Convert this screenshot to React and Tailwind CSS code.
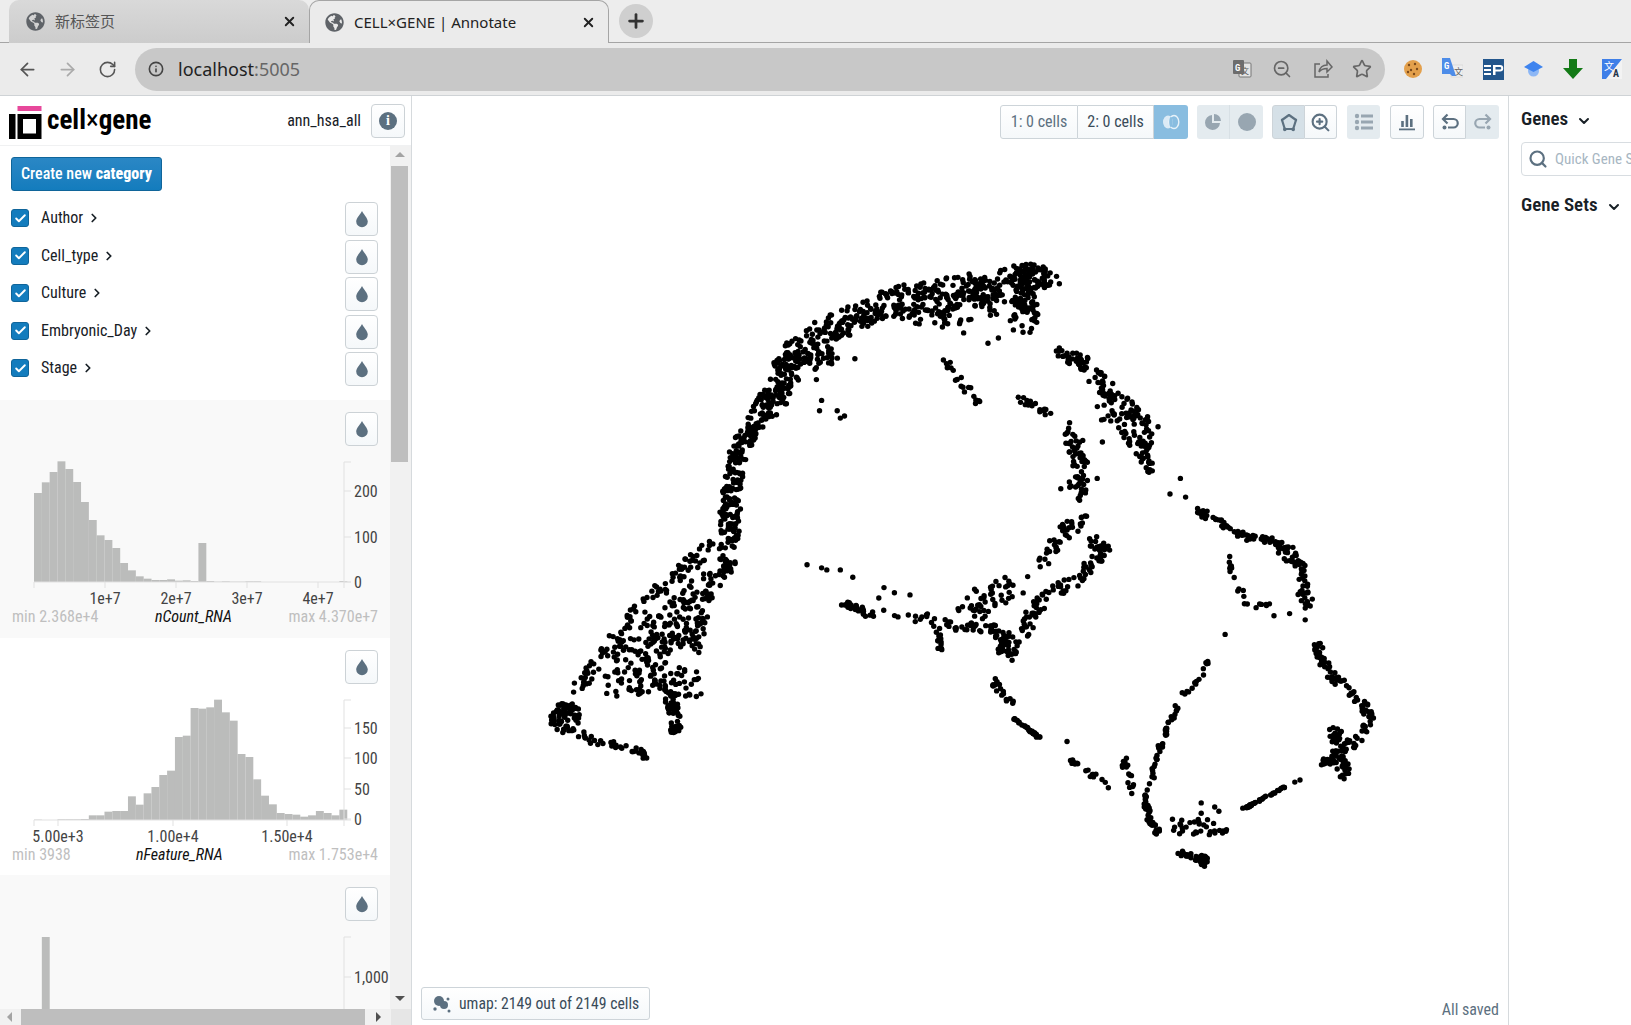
import { ArrowLeft, ArrowRight, RotateCw, Info, ZoomOut, Star, X, Plus, ChevronRight, ChevronDown, Search, ZoomIn, Check } from 'lucide-react';
import { FaGlobeAmericas } from 'react-icons/fa';

const hist1 = [280,248,217,185,208,247,307,361,407,421,445,490,512,530,537,541,541,539,543,542,544,430,544,546,545,546,546,545,545,547,547,547,547,547,547,547,547,547,547,544].map((t) => (547 - t) / 3);
const hist2 = [540,541,541,539,539,539,538,527,527,516,514,514,470,495,461,442,406,393,292,288,205,207,203,180,218,243,343,352,419,468,494,520,523,525,531,527,514,520,527,510].map((t) => (541 - t) / 3);
const hist3 = [0,120];

// scatter is traced in shrunk-picture coords, scaled by 1.04 when drawn
const strokes = [
  [[[542,688],[544,690]], 15, 70],
  [[[552,702],[570,712],[600,718],[625,728]], 4, 36],
  [[[645,668],[650,706]], 7, 52],
  [[[552,665],[580,630],[610,590],[650,552],[690,522]], 8, 95],
  [[[590,655],[640,650],[665,660]], 16, 85],
  [[[590,628],[650,620]], 13, 50],
  [[[620,610],[650,590],[680,560]], 14, 70],
  [[[640,622],[675,600]], 10, 32],
  [[[668,625],[680,575],[705,535]], 7, 50],
  [[[700,540],[702,490],[708,440],[720,415]], 10, 175],
  [[[720,415],[745,385],[765,340],[800,315],[850,293]], 14, 270],
  [[[850,293],[900,285],[950,280]], 17, 170],
  [[[880,302],[930,312]], 9, 28],
  [[[965,262],[1012,268]], 11, 85],
  [[[985,265],[985,312]], 14, 85],
  [[[940,270],[960,295]], 12, 40],
  [[[752,350],[800,345]], 10, 50],
  [[[730,385],[765,370]], 8, 28],
  [[[908,340],[925,370],[940,388]], 5, 18],
  [[[980,382],[1012,402]], 4, 18],
  [[[1010,338],[1045,350]], 7, 36],
  [[[1050,360],[1075,385],[1105,410]], 9, 72],
  [[[1105,410],[1100,440],[1112,458]], 5, 32],
  [[[1060,395],[1090,420],[1095,440]], 9, 32],
  [[[1030,415],[1040,450],[1035,478]], 10, 62],
  [[[1050,520],[1062,528],[1040,555],[1010,570],[995,585],[980,615]], 7, 100],
  [[[1003,542],[1025,510],[1045,500]], 8, 42],
  [[[968,622],[970,625]], 11, 40],
  [[[905,600],[940,605],[970,610]], 8, 42],
  [[[905,626],[900,602]], 3, 14],
  [[[925,590],[975,560]], 15, 48],
  [[[810,580],[832,588]], 3.5, 28],
  [[[832,588],[898,595]], 5, 18],
  [[[1150,490],[1195,515],[1240,525]], 4, 65],
  [[[1225,520],[1255,550],[1255,585]], 7, 55],
  [[[1180,535],[1195,575]], 3.5, 12],
  [[[1198,583],[1222,580]], 4, 8],
  [[[1265,620],[1280,650],[1305,670],[1318,690]], 5, 65],
  [[[1318,690],[1300,722]], 4, 18],
  [[[1285,700],[1290,745]], 9, 62],
  [[[1268,738],[1300,712]], 5, 20],
  [[[1195,778],[1235,757]], 1, 34],
  [[[1162,632],[1155,650],[1135,670],[1125,695],[1115,720],[1105,760],[1100,775]], 2.5, 62],
  [[[1100,765],[1105,790],[1115,802]], 3.5, 32],
  [[[1130,795],[1175,795]], 8, 32],
  [[[1132,820],[1158,826]], 3, 26],
  [[[1157,826],[1158,828]], 6, 18],
  [[[955,655],[975,680]], 4.5, 18],
  [[[975,690],[1000,710]], 1.5, 30],
  [[[1030,730],[1050,745],[1065,755]], 3.5, 18],
  [[[1080,730],[1090,765]], 4, 15],
];

const loose = [[776,543],[790,546],[795,548],[808,548],[820,555],[850,565],[860,570],[875,572],[845,575],[785,365],[790,385],[788,395],[805,395],[808,402],[812,400],[822,345],[800,340],[1135,460],[1140,478],[1125,475],[1178,610],[1225,592],[1240,590],[1255,596],[1245,752],[1250,750],[1155,772],[1155,782],[1168,776],[1172,780],[1026,713],[960,325],[950,330],[1020,470],[1055,460],[1060,425],[938,388],[942,386]];

function buildDots() {
  let s = 91823;
  const rnd = () => {
    s = (s + 0x6d2b79f5) | 0;
    let t = Math.imul(s ^ (s >>> 15), 1 | s);
    t = (t + Math.imul(t ^ (t >>> 7), 61 | t)) ^ t;
    return ((t ^ (t >>> 14)) >>> 0) / 4294967296;
  };
  const out = loose.map(([x, y]) => [x * 1.04, y * 1.04]);
  strokes.forEach(([pts, w, n]) => {
    const lens = pts.slice(1).map((p, i) => Math.hypot(p[0] - pts[i][0], p[1] - pts[i][1]));
    const total = lens.reduce((a, b) => a + b, 0);
    for (let k = 0; k < n; k++) {
      let d = rnd() * total;
      let i = 0;
      while (i < lens.length - 1 && d > lens[i]) d -= lens[i++];
      const f = d / lens[i];
      const a = rnd() * Math.PI * 2;
      const r = w * Math.sqrt(rnd());
      out.push([
        (pts[i][0] + (pts[i + 1][0] - pts[i][0]) * f + Math.cos(a) * r) * 1.04,
        (pts[i][1] + (pts[i + 1][1] - pts[i][1]) * f + Math.sin(a) * r) * 1.04,
      ]);
    }
  });
  return out;
}
const dots = buildDots();

function Drop() {
  return (
    <svg width="16" height="18" viewBox="0 0 16 18" fill="#5c7080">
      <path d="M8 1C7 3.5 2.2 8 2.2 11.6a5.8 5.6 0 0 0 11.6 0C13.8 8 9 3.5 8 1z" />
    </svg>
  );
}

function DropButton() {
  return (
    <button className="w-[33px] h-[34px] flex items-center justify-center rounded-[4px] border border-[#ccd2d6] bg-gradient-to-b from-white to-[#f5f8fa]">
      <Drop />
    </button>
  );
}

function CategoryRow({ name }) {
  return (
    <div className="h-[34px] flex items-center">
      <span className="w-[18px] h-[18px] -mt-[2px] rounded-[3px] bg-[#137cbd] border border-[#10659a] flex items-center justify-center">
        <Check size={13} color="white" strokeWidth={3.5} />
      </span>
      <span className="ml-3 text-[16px] text-[#182026] -mt-[2px]">{name}</span>
      <ChevronRight size={14} strokeWidth={3} className="ml-[4px] text-[#182026] -mt-[2px]" />
      <span className="ml-auto"><DropButton /></span>
    </div>
  );
}

function Histogram({ bars, start = 34, yTicks, xTicks, name, min, max, bg, nameClass, bottom = 'pb-[10px]' }) {
  const base = 132;
  return (
    <section className={`${bg} pt-3 ${bottom} shrink-0`}>
      <div className="flex justify-end pr-3"><DropButton /></div>
      <svg width="390" height="157" className="mt-1 block">
        {bars.map((h, i) => h > 0 && (
          <rect key={i} x={start + i * 7.83} y={base - h} width="7.9" height={h} fill="#bbbcbb" />
        ))}
        <path d={`M34 ${base + 6}V${base}H344V${base + 6}`} fill="none" stroke="#e1e1e1" />
        <path d={`M351 12H344V${base}H351`} fill="none" stroke="#e1e1e1" />
        {yTicks.map(([label, y]) => (
          <g key={label}>
            <path d={`M344 ${y}H351`} stroke="#e1e1e1" />
            <text x="354" y={y + 6} fontSize="16" fill="#444">{label}</text>
          </g>
        ))}
        {xTicks.map(([label, x]) => (
          <g key={label}>
            <path d={`M${x} ${base}V${base + 6}`} stroke="#e1e1e1" />
            <text x={x} y={base + 22} fontSize="16" fill="#444" textAnchor="middle">{label}</text>
          </g>
        ))}
      </svg>
      <div className="relative h-5 px-3 flex justify-between items-center text-[16px] text-[#bfbfbf]">
        <span>{min}</span>
        <span className={`${nameClass} absolute italic text-[#111]`}>{name}</span>
        <span>{max}</span>
      </div>
    </section>
  );
}

function Btn({ w, children, className = '' }) {
  return (
    <div style={{ width: w }} className={`h-full flex items-center justify-center border border-[#cdd4d9] bg-gradient-to-b from-white to-[#f5f8fa] text-[#5c7080] ${className}`}>
      {children}
    </div>
  );
}

function PolygonIcon() {
  return (
    <svg width="22" height="22" viewBox="0 0 22 22" fill="none" stroke="#5c7080" strokeWidth="2.2">
      <path d="M11 4l7 5-2.8 9H6.800L4 9z" strokeLinejoin="round" />
      <circle cx="4" cy="9" r="1.2" fill="#5c7080" stroke="none" />
      <circle cx="18" cy="9" r="1.2" fill="#5c7080" stroke="none" />
      <circle cx="6.800" cy="18.400" r="1.800" fill="#5c7080" stroke="none" />
      <circle cx="15.200" cy="18.400" r="1.800" fill="#5c7080" stroke="none" />
    </svg>
  );
}

function UndoIcon({ color, flip }) {
  return (
    <svg width="20" height="20" viewBox="0 0 20 20" fill="none" stroke={color} strokeWidth="2.2" className={flip ? '-scale-x-100' : ''}>
      <path d="M3 7h10.500a4 4 0 0 1 0 8.500H8" />
      <path d="M7.500 2.500L3 7l4.500 4.500" />
      <circle cx="4.500" cy="15.500" r="2" fill={color} stroke="none" />
    </svg>
  );
}

function Toolbar() {
  return (
    <div className="relative z-10 flex justify-end items-start pt-[9px] pr-[9px] h-[44px]">
      <div className="h-[34px] flex text-[16px] text-[#182026]">
        <Btn w={78} className="rounded-l-[3px] !text-[#5c7080]">1: 0 cells</Btn>
        <Btn w={76} className="border-l-0 !text-[#394b59]">2: 0 cells</Btn>
        <div className="w-[34px] h-full bg-[#89bde0] rounded-r-[3px] flex items-center justify-center">
          <svg width="18" height="16" viewBox="0 0 18 16" fill="none">
            <ellipse cx="6" cy="8" rx="5" ry="6.500" fill="#fff" fillOpacity=".7" />
            <ellipse cx="12" cy="8" rx="4.800" ry="6.500" stroke="#fff" strokeOpacity=".8" strokeWidth="1.400" />
            <ellipse cx="9" cy="8" rx="1.800" ry="5" fill="#89bde0" />
          </svg>
        </div>
      </div>
      <div className="ml-[9px] h-[34px] w-[66px] flex rounded-[3px] bg-[#e4ebef]">
        <div className="w-[33px] flex items-center justify-center border-r border-[#d8e0e5]">
          <svg width="18" height="18" viewBox="0 0 18 18" fill="#98a6b1">
            <path d="M8 2a7.500 7.500 0 1 0 8 8H8z" />
            <path d="M10 1v7h7a7 7 0 0 0-7-7z" />
          </svg>
        </div>
        <div className="w-[33px] flex items-center justify-center">
          <span className="w-[18px] h-[18px] rounded-full bg-[#98a6b1]" />
        </div>
      </div>
      <div className="ml-[9px] h-[34px] flex">
        <Btn w={33} className="rounded-l-[3px] !from-[#d5e0e7] !to-[#d5e0e7]"><PolygonIcon /></Btn>
        <Btn w={32} className="border-l-0 rounded-r-[3px]"><ZoomIn size={21} strokeWidth={2.4} /></Btn>
      </div>
      <div className="ml-[10px] h-[34px] w-[33px] rounded-[3px] bg-[#e4ebef] flex items-center justify-center">
        <svg width="20" height="18" viewBox="0 0 20 18" fill="#98a6b1">
          <circle cx="3" cy="3" r="2.200" /><circle cx="3" cy="9" r="2.200" /><circle cx="3" cy="15" r="2.200" />
          <rect x="7" y="1.500" width="12" height="3" /><rect x="7" y="7.500" width="12" height="3" /><rect x="7" y="13.500" width="12" height="3" />
        </svg>
      </div>
      <div className="ml-[10px] h-[34px]">
        <Btn w={34} className="rounded-[3px]">
          <svg width="18" height="18" viewBox="0 0 18 18" fill="#5c7080">
            <rect x="1" y="15.500" width="16" height="1.800" />
            <rect x="3.200" y="8" width="2.600" height="6" /><rect x="7.600" y="2" width="2.600" height="12" /><rect x="12" y="6" width="2.600" height="8" />
          </svg>
        </Btn>
      </div>
      <div className="ml-[9px] h-[34px] flex">
        <Btn w={33} className="rounded-l-[3px]"><UndoIcon color="#5c7080" /></Btn>
        <div className="w-[33px] h-full rounded-r-[3px] bg-[#e4ebef] flex items-center justify-center"><UndoIcon color="#98a6b1" flip /></div>
      </div>
    </div>
  );
}

function Scatter() {
  return (
    <svg className="absolute left-0 top-0" width="1096" height="929" viewBox="412 96 1096 929">
      {dots.map(([x, y], i) => <circle key={i} cx={x} cy={y} r="2.700" fill="#000" />)}
    </svg>
  );
}

function Sidebar() {
  return (
    <aside className="w-[412px] shrink-0 h-full flex flex-col border-r border-[#d6dadd]">
      <header className="h-[50px] shrink-0 flex items-center border-b border-[#f0f1f2] pl-[9px] pr-[6px]">
        <svg width="33" height="33" viewBox="0 0 33 33" className="mt-[3px]">
          <rect x="8.500" y="0" width="24" height="5" fill="#e7489b" />
          <rect x="0" y="8" width="6.500" height="25" fill="#000" />
          <path fill="#000" fillRule="evenodd" d="M8.500 8h24v25h-24zM14 13v14.500h13V13z" />
        </svg>
        <span className="ml-[5px] text-[27px] font-bold text-black leading-none">cell<span className="font-normal">×</span>gene</span>
        <span className="ml-auto text-[16px] text-[#182026]">ann_hsa_all</span>
        <button className="ml-[10px] w-[34px] h-[34px] rounded-[4px] border border-[#ccd2d6] bg-gradient-to-b from-white to-[#f5f8fa] flex items-center justify-center">
          <span className="w-[18px] h-[18px] rounded-full bg-[#5c7080] text-white text-[14px] font-bold leading-[18px] text-center font-['Liberation_Serif',serif]">i</span>
        </button>
      </header>
      <div className="flex-1 min-h-0 flex">
        <div className="w-[390px] overflow-hidden">
          <div className="pl-[11px] pr-3 pt-[11px]">
            <button className="w-[151px] h-[34px] rounded-[3px] bg-gradient-to-b from-[#2a87c5] to-[#137cbd] border border-[#10659a] text-white text-[16px] font-medium whitespace-nowrap">Create new <b className="font-extrabold">category</b></button>
            <div className="mt-[11px] flex flex-col gap-[3.5px]">
              {['Author', 'Cell_type', 'Culture', 'Embryonic_Day', 'Stage'].map((n) => <CategoryRow key={n} name={n} />)}
            </div>
          </div>
          <div className="mt-[14px]">
            <Histogram bars={hist1} bg="bg-[#f9f9f9]" bottom="pb-[11px]" name="nCount_RNA" nameClass="left-[155px]" min="min 2.368e+4" max="max 4.370e+7"
              yTicks={[['0', 132], ['100', 87], ['200', 41]]} xTicks={[['1e+7', 105], ['2e+7', 176], ['3e+7', 247], ['4e+7', 318]]} />
            <Histogram bars={hist2} bg="bg-white" name="nFeature_RNA" nameClass="left-[136px]" min="min 3938" max="max 1.753e+4"
              yTicks={[['0', 131], ['50', 101], ['100', 70], ['150', 40]]} xTicks={[['5.00e+3', 58], ['1.00e+4', 173], ['1.50e+4', 287]]} />
            <Histogram bars={hist3} start={34} bg="bg-[#f9f9f9]" name="" nameClass="" min="" max=""
              yTicks={[['1,000', 52]]} xTicks={[]} />
          </div>
        </div>
        <div className="w-[21px] bg-[#f1f1f1] flex flex-col items-center pr-[2px]">
          <span className="mt-[6px] w-0 h-0 border-x-[5px] border-x-transparent border-b-[5px] border-b-[#a3a3a3]" />
          <span className="mt-[9px] w-[17px] h-[296px] bg-[#bebebe]" />
          <span className="mt-auto mb-[8px] w-0 h-0 border-x-[5px] border-x-transparent border-t-[5px] border-t-[#505050]" />
        </div>
      </div>
      <div className="h-[16px] shrink-0 bg-[#f1f1f1] flex items-center">
        <span className="ml-[7px] w-0 h-0 border-y-[5px] border-y-transparent border-r-[5px] border-r-[#a3a3a3]" />
        <span className="ml-[9px] w-[344px] h-full bg-[#bebebe]" />
        <span className="ml-[11px] w-0 h-0 border-y-[5px] border-y-transparent border-l-[5px] border-l-[#505050]" />
        <span className="ml-auto w-[20px] h-full bg-[#e6e6e6]" />
      </div>
    </aside>
  );
}

function RightPanel() {
  return (
    <aside className="flex-1 min-w-0 h-full overflow-hidden border-l border-[#d6dadd] pl-[12px] pt-[10px]">
      <div className="flex items-center h-[26px] text-[19px] font-semibold text-[#182026] whitespace-nowrap">
        Genes <ChevronDown size={16} strokeWidth={3} className="ml-[8px] mt-[3px]" />
      </div>
      <div className="mt-[10px] w-[200px] h-[34px] rounded-[4px] border border-[#d8dde1] flex items-center pl-[6px] text-[#a7b6c2] text-[15px] whitespace-nowrap">
        <Search size={20} strokeWidth={2.6} color="#5c7080" />
        <span className="ml-[7px]">Quick Gene Search</span>
      </div>
      <div className="mt-[16px] flex items-center h-[26px] text-[19px] font-semibold text-[#182026] whitespace-nowrap">
        Gene Sets <ChevronDown size={16} strokeWidth={3} className="ml-[8px] mt-[3px]" />
      </div>
    </aside>
  );
}

function BrowserTab({ title, active }) {
  return (
    <div className={`w-[300px] h-[43px] rounded-t-[10px] flex items-center pr-[12px] ${active ? 'pl-[15px] bg-[#ebebeb] border border-[#a5a5a5] border-b-0 text-[#222] relative z-10' : 'pl-[17px] bg-gradient-to-b from-[#d9d9d9] to-[#cccccc] text-[#555]'}`}>
      <FaGlobeAmericas size={19} className="text-[#5f6368] shrink-0" />
      <span className="ml-[10px] text-[15px] font-['Noto_Sans','Noto_Sans_CJK_SC',sans-serif] whitespace-nowrap">{title}</span>
      <X size={15} strokeWidth={3} className="ml-auto text-[#222]" />
    </div>
  );
}

function Extensions() {
  return (
    <div className="ml-[17px] flex items-center">
      <svg width="20" height="20" viewBox="0 0 20 20" className="ml-[1px]">
        <circle cx="10" cy="10" r="9" fill="#e3a04c" />
        {[[6,6],[12,5],[14,10],[8,11],[5,13],[11,15]].map(([x, y]) => <circle key={x + '' + y} cx={x} cy={y} r="1.200" fill="#7a4a1c" />)}
      </svg>
      <svg width="21" height="22" viewBox="0 0 21 22" className="ml-[19px]">
        <rect x="9" y="7" width="12" height="12" fill="#eee" stroke="#ccc" strokeWidth=".5" />
        <text x="12" y="17" fontSize="9" fill="#666">文</text>
        <path d="M0 0h8l6 18h-4l-2-2H0z" fill="#4d8ce8" />
        <text x="2" y="11" fontSize="9" fontWeight="700" fill="#fff">G</text>
      </svg>
      <svg width="21" height="21" viewBox="0 0 21 21" className="ml-[20px]">
        <rect width="21" height="21" fill="#23568c" />
        <path fillRule="evenodd" d="M1 6h7v2H1zM1 10h7v2H1zM1 14h7v2H1zM10 6h7a3 3 0 0 1 0 6.500h-4.500V16H10zM12.500 8v2.500H17a1.200 1.200 0 0 0 0-2.500z" fill="#fff" />
      </svg>
      <svg width="19" height="17" viewBox="0 0 19 17" className="ml-[20px]">
        <circle cx="9.500" cy="10" r="5.500" fill="#8db7f5" />
        <path d="M9.500 0L19 6l-9.500 5L0 6z" fill="#3f84ee" />
      </svg>
      <svg width="20" height="20" viewBox="0 0 20 20" className="ml-[20px]">
        <path d="M6 0h8v9h6L10 20 0 9h6z" fill="#137a16" />
      </svg>
      <svg width="20" height="20" viewBox="0 0 20 20" className="ml-[19px]">
        <rect width="20" height="20" fill="#3f7fe8" />
        <path d="M20 0v20H4z" fill="#f3f3f3" />
        <text x="2" y="11" fontSize="10" fill="#fff">文</text>
        <text x="11" y="18" fontSize="10" fontWeight="700" fill="#27364a">A</text>
      </svg>
    </div>
  );
}

function BrowserChrome() {
  return (
    <div className="shrink-0 bg-[#ebebeb]">
      <div className="h-[43px] flex border-b border-[#a5a5a5] pl-[9px] bg-[#ededed]">
        <BrowserTab title="新标签页" />
        <BrowserTab title="CELL×GENE | Annotate" active />
        <button className="ml-[10px] mt-[4px] w-[34px] h-[34px] rounded-full bg-[#cfcfcf] flex items-center justify-center">
          <Plus size={22} strokeWidth={3} className="text-[#333]" />
        </button>
      </div>
      <div className="h-[53px] flex items-center border-b border-[#cfd3d6] pl-[17px]">
        <ArrowLeft size={21} className="text-[#555]" />
        <ArrowRight size={21} className="ml-[19px] text-[#aaa]" />
        <RotateCw size={19} className="ml-[20px] text-[#555]" />
        <div className="ml-[18px] w-[1250px] h-[43px] rounded-full bg-[#c8c8c8] flex items-center pl-[13px] pr-[13px] text-[#444]">
          <Info size={16} strokeWidth={2.4} />
          <span className="ml-[14px] text-[18px] text-[#222] font-['Noto_Sans',sans-serif]">localhost<span className="text-[#666]">:5005</span></span>
          <svg width="20" height="20" viewBox="0 0 20 20" className="ml-auto">
            <rect x="7" y="4" width="12" height="14" rx="1" fill="#e4e4e4" stroke="#777" />
            <text x="9" y="15" fontSize="8" fill="#555">文</text>
            <rect x="1" y="1" width="11" height="14" rx="1" fill="#6d6d6d" />
            <text x="3" y="12" fontSize="9" fontWeight="700" fill="#fff">G</text>
          </svg>
          <ZoomOut size={20} className="ml-[20px] text-[#666]" />
          <svg width="20" height="20" viewBox="0 0 20 20" fill="none" stroke="#666" strokeWidth="1.500" className="ml-[21px]">
            <path d="M7 5H2v13h13v-3M6 13c1-5 4-7 8-7V2l5 6-5 5V9.500c-3 0-6 1-8 3.500z" />
          </svg>
          <Star size={20} strokeWidth={2} className="ml-[19px] text-[#666]" />
        </div>
        <Extensions />
      </div>
    </div>
  );
}

export default function App() {
  return (
    <div className="w-[1631px] h-screen overflow-hidden flex flex-col bg-white font-['Roboto','Noto_Sans_CJK_SC',sans-serif] [font-stretch:85%]">
      <BrowserChrome />
      <main className="flex-1 min-h-0 flex">
        <Sidebar />
        <div className="relative w-[1096px] shrink-0 h-full">
          <Scatter />
          <Toolbar />
          <div className="absolute left-[9px] bottom-[5px] w-[229px] h-[33px] rounded-[3px] border border-[#cdd4d9] bg-gradient-to-b from-white to-[#f5f8fa] flex items-center pl-[10px] text-[15.700px] text-[#394b59]">
            <svg width="20" height="20" viewBox="0 0 20 20" fill="#5c7080">
              <circle cx="7" cy="7" r="5" /><circle cx="12" cy="11" r="4" /><circle cx="16" cy="5" r="1.500" /><circle cx="3" cy="15" r="1.700" /><circle cx="17" cy="17" r="1.500" />
            </svg>
            <span className="ml-[7px] whitespace-nowrap">umap: 2149 out of 2149 cells</span>
          </div>
          <span className="absolute right-[9px] bottom-[3px] text-[16px] text-[#5c7080]">All saved</span>
        </div>
        <RightPanel />
      </main>
    </div>
  );
}
